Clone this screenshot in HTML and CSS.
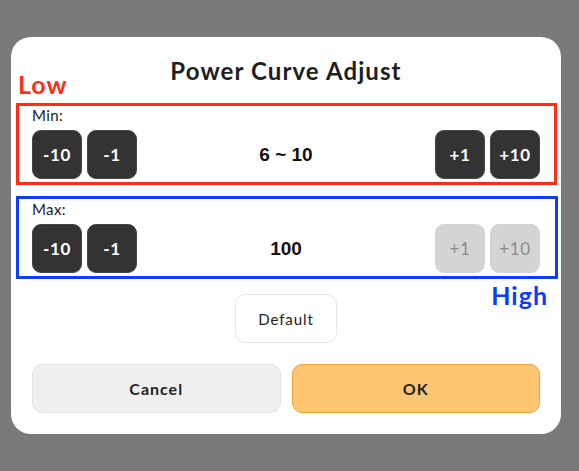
FILE: index.html
```html
<!DOCTYPE html>
<html>
<head>
<meta charset="utf-8">
<link rel="stylesheet" href="styles.css">
</head>
<body>
<div class="modal">
  <div class="title">Power Curve Adjust</div>
  <div class="section">
    <div class="label">Min:</div>
    <div class="row">
      <div class="group">
        <div class="btn">-10</div>
        <div class="btn">-1</div>
      </div>
      <div class="value">6 ~ 10</div>
      <div class="group">
        <div class="btn">+1</div>
        <div class="btn">+10</div>
      </div>
    </div>
  </div>
  <div class="section">
    <div class="label">Max:</div>
    <div class="row">
      <div class="group">
        <div class="btn">-10</div>
        <div class="btn">-1</div>
      </div>
      <div class="value">100</div>
      <div class="group">
        <div class="btn disabled">+1</div>
        <div class="btn disabled">+10</div>
      </div>
    </div>
  </div>
  <div class="center">
    <div class="default">Default</div>
  </div>
  <div class="actions">
    <div class="action cancel">Cancel</div>
    <div class="action ok">OK</div>
  </div>

  <div class="anno-box red-box"></div>
  <div class="anno-box blue-box"></div>
  <div class="anno low">Low</div>
  <div class="anno high">High</div>
</div>
</body>
</html>
```
FILE: styles.css
```css
html, body {
  margin: 0;
  padding: 0;
  background: #7a7a7a;
  font-family: "Lato", "Noto Sans", sans-serif;
  color: #222;
}
body {
  width: 579px;
  height: 471px;
  overflow: hidden;
}
.modal {
  position: relative;
  box-sizing: border-box;
  width: 550px;
  height: 397px;
  margin: 37px 0 0 11px;
  background: #fff;
  border-radius: 20px;
  padding: 20px 21px 21px 21px;
  display: flex;
  flex-direction: column;
  gap: 21px;
}
.title {
  font-size: 24px;
  line-height: 28px;
  font-weight: 700;
  letter-spacing: 1.1px;
  text-align: center;
  color: #1e1e1e;
}
.section {
  display: flex;
  flex-direction: column;
  gap: 6px;
}
.label {
  font-size: 15px;
  line-height: 18px;
  letter-spacing: 0.4px;
  color: #222;
}
.row {
  display: flex;
  align-items: center;
}
.group {
  display: flex;
  gap: 5px;
}
.btn {
  box-sizing: border-box;
  width: 50px;
  height: 49px;
  border-radius: 9px;
  background: #333;
  border: 1px solid #454545;
  color: #fff;
  font-size: 17px;
  font-weight: 700;
  letter-spacing: 0.6px;
  display: flex;
  align-items: center;
  justify-content: center;
}
.btn.disabled {
  background: #d4d4d4;
  border-color: #d4d4d4;
  color: #8c8c8c;
  font-weight: 400;
}
.value {
  flex: 1;
  text-align: center;
  font-family: "Liberation Sans", Arial, sans-serif;
  font-weight: 700;
  font-size: 19px;
  color: #111;
}
.center {
  display: flex;
  justify-content: center;
}
.default {
  box-sizing: border-box;
  width: 102px;
  height: 49px;
  border: 1px solid #e6e6e6;
  border-radius: 10px;
  display: flex;
  align-items: center;
  justify-content: center;
  font-size: 15px;
  letter-spacing: 0.9px;
  color: #222;
}
.actions {
  display: flex;
  gap: 11px;
}
.action {
  box-sizing: border-box;
  flex: 1;
  height: 49px;
  border-radius: 10px;
  display: flex;
  align-items: center;
  justify-content: center;
  font-size: 16px;
  font-weight: 700;
  letter-spacing: 1px;
  color: #222;
}
.cancel {
  background: #efefef;
  border: 1px solid #e3e3e3;
}
.ok {
  background: #ffc671;
  border: 1px solid #f5a235;
}
.anno-box {
  position: absolute;
  box-sizing: border-box;
  border: 3px solid;
}
.red-box {
  left: 5px;
  top: 66px;
  width: 541px;
  height: 82px;
  border-color: #ff2d16;
}
.blue-box {
  left: 5px;
  top: 159px;
  width: 542px;
  height: 83px;
  border-color: #0b3dff;
}
.anno {
  position: absolute;
  font-size: 25px;
  line-height: 24px;
  font-weight: 700;
  letter-spacing: 1px;
}
.low {
  left: 7px;
  top: 35px;
  color: #ff2d16;
}
.high {
  right: 13px;
  top: 246px;
  color: #0b3dff;
}
```
